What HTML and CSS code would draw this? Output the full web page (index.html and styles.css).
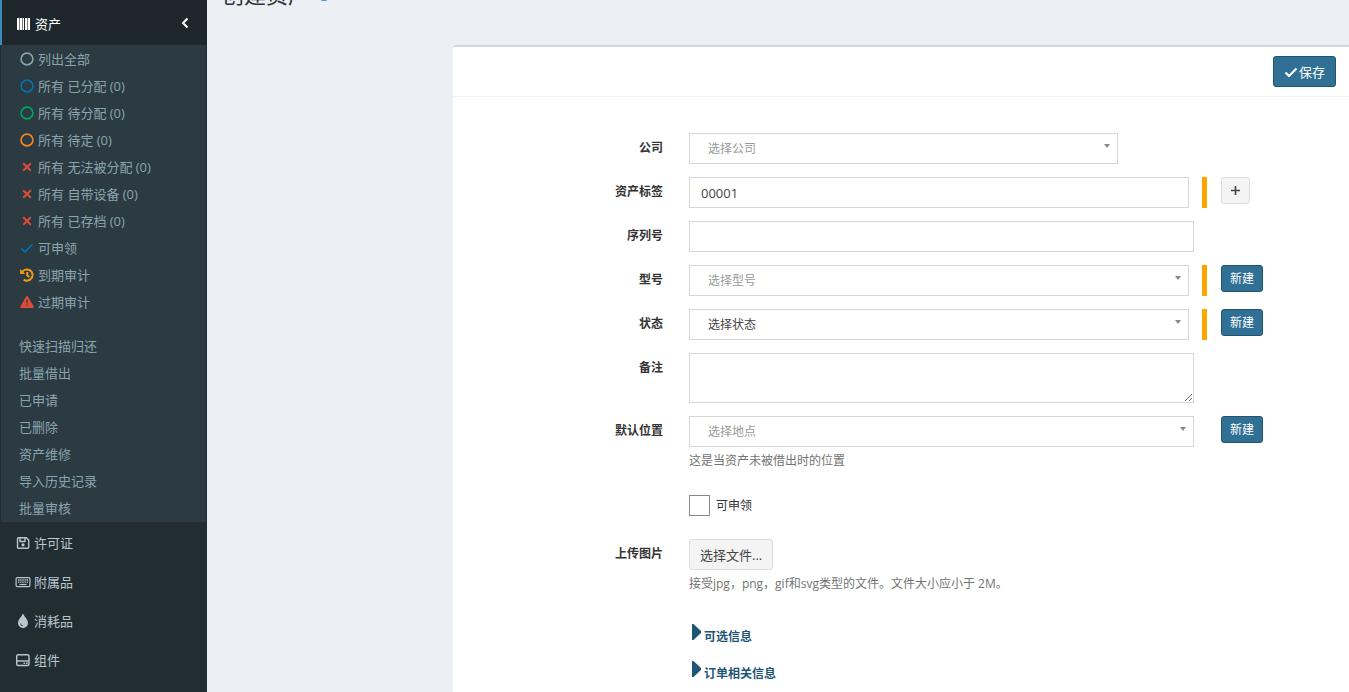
FILE: index.html
```html
<!DOCTYPE html>
<html lang="zh-CN">
<head>
<meta charset="utf-8">
<title>创建资产</title>
<link rel="stylesheet" href="styles.css">
</head>
<body>
<div class="layout">
  <nav class="sidebar">
    <a class="menu-item menu-item--active" href="#">
      <svg class="menu-icon" viewBox="0 0 16 14"><path fill="currentColor" d="M1 1h2v12H1zM4 1h2v12H4zM7 1h1v12H7zM9 1h2v12H9zM12 1h2v12h-2z"/><path fill="currentColor" opacity=".4" d="M3 1h1v12H3zM6 1h1v12H6zM11 1h1v12h-1z"/></svg>
      <span>资产</span>
      <svg class="chevron" viewBox="0 0 8 12"><path d="M6.500 1.500 2 6l4.500 4.500" fill="none" stroke="currentColor" stroke-width="2"/></svg>
    </a>
    <div class="submenu">
      <a class="sub-item" href="#"><svg class="sub-icon" viewBox="0 0 14 14"><circle cx="7" cy="7" r="5.900"/></svg>列出全部</a>
      <a class="sub-item" href="#"><svg class="sub-icon blue" viewBox="0 0 14 14"><circle cx="7" cy="7" r="5.900"/></svg>所有 已分配 (0)</a>
      <a class="sub-item" href="#"><svg class="sub-icon green" viewBox="0 0 14 14"><circle cx="7" cy="7" r="5.900"/></svg>所有 待分配 (0)</a>
      <a class="sub-item" href="#"><svg class="sub-icon orange" viewBox="0 0 14 14"><circle cx="7" cy="7" r="5.900"/></svg>所有 待定 (0)</a>
      <a class="sub-item" href="#"><svg class="sub-icon red thick" viewBox="0 0 14 14"><path d="m3.200 3.200 7.600 7.600m0-7.600-7.600 7.600"/></svg>所有 无法被分配 (0)</a>
      <a class="sub-item" href="#"><svg class="sub-icon red thick" viewBox="0 0 14 14"><path d="m3.200 3.200 7.600 7.600m0-7.600-7.600 7.600"/></svg>所有 自带设备 (0)</a>
      <a class="sub-item" href="#"><svg class="sub-icon red thick" viewBox="0 0 14 14"><path d="m3.200 3.200 7.600 7.600m0-7.600-7.600 7.600"/></svg>所有 已存档 (0)</a>
      <a class="sub-item" href="#"><svg class="sub-icon blue" viewBox="0 0 14 14"><path d="m1.500 7.500 3.500 3.300 7.500-7.600"/></svg>可申领</a>
      <a class="sub-item" href="#"><svg class="sub-icon amber thick" viewBox="0 0 14 14"><path d="M2 4.400A5.600 5.600 0 1 1 3.700 11.600M7.300 4v3.300l2 1.700"/><path class="solid" d="M.2 1v5h5z"/></svg>到期审计</a>
      <a class="sub-item" href="#"><svg class="sub-icon red" viewBox="0 0 14 14"><path class="solid" fill-rule="evenodd" d="M7 .8c.4 0 .7.2.9.6l5.700 10c.5.800 0 1.600-.9 1.600H1.300c-.9 0-1.400-.8-.9-1.600l5.700-10c.2-.4.5-.6.900-.6zM6.300 4.500l.2 4h1l.2-4zM7 9.500a.8.8 0 1 0 0 1.600.8.8 0 0 0 0-1.600z"/></svg>过期审计</a>
      <hr class="divider">
      <a class="sub-item" href="#">快速扫描归还</a>
      <a class="sub-item" href="#">批量借出</a>
      <a class="sub-item" href="#">已申请</a>
      <a class="sub-item" href="#">已删除</a>
      <a class="sub-item" href="#">资产维修</a>
      <a class="sub-item" href="#">导入历史记录</a>
      <a class="sub-item" href="#">批量审核</a>
    </div>
    <a class="menu-item" href="#">
      <svg class="menu-icon" viewBox="0 0 16 14"><path d="M3.500 1.700h7.800l2.400 2.400v7.200a1 1 0 0 1-1 1H3.500a1 1 0 0 1-1-1V2.700a1 1 0 0 1 1-1zM5 2v3.500h5V2" fill="none" stroke="currentColor" stroke-width="1.400"/><circle cx="8" cy="8.800" r="1.600" fill="currentColor"/></svg>
      <span>许可证</span>
    </a>
    <a class="menu-item" href="#">
      <svg class="menu-icon" viewBox="0 0 16 14"><rect x="1.100" y="2.600" width="13.800" height="9" rx="1.200" fill="none" stroke="currentColor" stroke-width="1.200"/><path d="M3 5h10M3 7.200h10" stroke="currentColor" stroke-width="1.300" stroke-dasharray="1.400 .75"/><path d="M4.500 9.500h7" stroke="currentColor" stroke-width="1.200"/></svg>
      <span>附属品</span>
    </a>
    <a class="menu-item" href="#">
      <svg class="menu-icon" viewBox="0 0 16 14"><path fill="currentColor" fill-rule="evenodd" d="M8 0c.4 0 .6.300.7.600.8 2.500 4.300 5 4.300 8.400A4.800 4.800 0 0 1 8 14a4.800 4.800 0 0 1-5-5C3 5.600 6.500 3.100 7.300.600 7.400.3 7.600 0 8 0zM5.200 9.400c.1 1.600 1.200 2.700 2.800 2.800v-.8c-1.200-.1-1.900-.9-2-2z"/></svg>
      <span>消耗品</span>
    </a>
    <a class="menu-item" href="#">
      <svg class="menu-icon" viewBox="0 0 16 14"><rect x="1.700" y="1.700" width="12.300" height="10.800" rx="1.500" fill="none" stroke="currentColor" stroke-width="1.400"/><path d="M2 8h12" stroke="currentColor" stroke-width="1.400"/><path d="M8.500 10.200h1.600m1 0h1.600" stroke="currentColor" stroke-width="1.600"/></svg>
      <span>组件</span>
    </a>
  </nav>

  <main class="content">
    <header class="page-header">
      <h1 class="page-title">创建资产</h1>
      <svg class="info-icon" viewBox="0 0 16 16"><circle cx="8" cy="8" r="8" fill="#3c8dbc"/><path d="M8 7v5M8 3.500v2" stroke="#fff" stroke-width="2"/></svg>
    </header>
    <form class="box">
      <div class="box-header">
        <button class="btn btn-primary" type="button"><svg class="btn-icon" viewBox="0 0 14 14"><path d="m1.500 7.500 3.500 3.500 7.500-7.500" fill="none" stroke="currentColor" stroke-width="2.200"/></svg>保存</button>
      </div>
      <div class="box-body">
        <div class="row">
          <label class="label" for="company">公司</label>
          <div class="field"><div class="select select--short"><select class="control muted" id="company"><option>选择公司</option></select></div></div>
        </div>
        <div class="row">
          <label class="label" for="tag">资产标签</label>
          <div class="field required"><input class="control" id="tag" type="text" value="00001"></div>
          <div class="action"><button class="btn btn-default btn-small" type="button" aria-label="添加"><svg class="plus" viewBox="0 0 11 11"><path d="M5.500 1v9M1 5.500h9" stroke="currentColor" stroke-width="1.600"/></svg></button></div>
        </div>
        <div class="row">
          <label class="label" for="serial">序列号</label>
          <div class="field"><input class="control" id="serial" type="text"></div>
        </div>
        <div class="row">
          <label class="label" for="model">型号</label>
          <div class="field required"><div class="select"><select class="control muted" id="model"><option>选择型号</option></select></div></div>
          <div class="action"><button class="btn btn-primary btn-small" type="button">新建</button></div>
        </div>
        <div class="row">
          <label class="label" for="status">状态</label>
          <div class="field required"><div class="select"><select class="control" id="status"><option>选择状态</option></select></div></div>
          <div class="action"><button class="btn btn-primary btn-small" type="button">新建</button></div>
        </div>
        <div class="row">
          <label class="label" for="notes">备注</label>
          <div class="field"><textarea class="control notes" id="notes"></textarea></div>
        </div>
        <div class="row">
          <label class="label" for="location">默认位置</label>
          <div class="field">
            <div class="select"><select class="control muted" id="location"><option>选择地点</option></select></div>
            <p class="help">这是当资产未被借出时的位置</p>
          </div>
          <div class="action"><button class="btn btn-primary btn-small" type="button">新建</button></div>
        </div>
        <div class="row row--check">
          <div class="field"><label class="check"><input class="checkbox" type="checkbox">可申领</label></div>
        </div>
        <div class="row">
          <span class="label" id="upload-label">上传图片</span>
          <div class="field">
            <button class="btn btn-default" type="button" aria-describedby="upload-label">选择文件...</button>
            <p class="help">接受jpg，png，gif和svg类型的文件。文件大小应小于 2M。</p>
          </div>
        </div>
        <div class="row row--more">
          <div class="field more">
            <a class="toggle" href="#"><svg class="caret" viewBox="0 0 10 16"><path d="M0 0h1.500L9 7v2L1.500 16H0z" fill="currentColor"/></svg>可选信息</a>
            <a class="toggle" href="#"><svg class="caret" viewBox="0 0 10 16"><path d="M0 0h1.500L9 7v2L1.500 16H0z" fill="currentColor"/></svg>订单相关信息</a>
          </div>
        </div>
      </div>
    </form>
  </main>
</div>
</body>
</html>
```

FILE: styles.css
```css
* {
  box-sizing: border-box;
}

body {
  margin: 0;
  font: 13px/18px "Open Sans", "Noto Sans CJK SC", sans-serif;
  color: #333;
  background: #ecf0f5;
}

a {
  text-decoration: none;
}

.layout {
  display: flex;
  height: 100vh;
  overflow: hidden;
}

/* Sidebar */
.sidebar {
  flex: 0 0 207px;
  background: #222d32;
}

.menu-item {
  display: flex;
  align-items: center;
  gap: 3px;
  height: 39px;
  padding: 0 18px 0 15px;
  color: #b8c7ce;
}

.menu-item--active {
  height: 45px;
  padding: 3px 18px 0 14px;
  border-left: 2px solid #3c8dbc;
  background: #1e282c;
  color: #fff;
}

.menu-icon {
  width: 16px;
  height: 14px;
}

.chevron {
  width: 8px;
  height: 12px;
  margin: 0 0 3px auto;
}

.submenu {
  margin: 0 1px 1px;
  padding-bottom: 1px;
  background: #2c3b41;
}

.sub-item {
  display: flex;
  align-items: center;
  gap: 4px;
  height: 27px;
  padding-left: 18px;
  color: #8aa4af;
  white-space: pre;
}

.sub-icon {
  width: 14px;
  height: 14px;
  margin-left: 1px;
  fill: none;
  stroke: currentColor;
  stroke-width: 1.6;
}

.thick {
  stroke-width: 2;
}

.solid {
  fill: currentColor;
  stroke: none;
}

.blue { color: #0073b7; }
.green { color: #00a65a; }
.orange { color: #ff851b; }
.red { color: #dd4b39; }
.amber { color: #f39c12; }

.divider {
  height: 17px;
  margin: 0;
  border: 0;
}

/* Content */
.content {
  flex: 1;
  display: grid;
  grid-template-columns: 246fr 896fr;
  grid-template-rows: 45px 1fr;
}

.page-header {
  grid-column: 1 / -1;
  display: flex;
  align-items: center;
  gap: 7px;
  height: 24px;
  margin-top: -18px;
  padding-left: 15px;
}

.page-title {
  margin: 0;
  font-size: 22px;
  font-weight: 400;
  line-height: 24px;
}

.info-icon {
  width: 14px;
  height: 14px;
}

.box {
  grid-column: 2;
  border-top: 2px solid #d2d6de;
  border-top-left-radius: 3px;
  background: #fff;
}

.box-header {
  display: flex;
  justify-content: flex-end;
  padding: 9px 13px;
  border-bottom: 1px solid #f4f4f4;
}

.box-body {
  display: grid;
  gap: 13px;
  padding-top: 36px;
}

.row {
  display: grid;
  grid-template-columns: 236fr 518fr 142fr;
  align-items: start;
  min-height: 31px;
}

.label {
  padding: 6px 26px 0 0;
  font-size: 12px;
  font-weight: 700;
  text-align: right;
}

.field {
  grid-column: 2;
  padding-right: 13px;
}

.required {
  display: flex;
  gap: 13px;
  padding-right: 0;
}

.required::after {
  content: "";
  flex: 0 0 5px;
  background: #ffa500;
}

.action {
  padding-left: 14px;
}

.control {
  display: block;
  width: 100%;
  height: 31px;
  margin: 0;
  padding: 1px 11px 0;
  border: 1px solid #d2d6de;
  border-radius: 0;
  background: #fff;
  color: #444;
  font: inherit;
}

.notes {
  height: 50px;
  resize: vertical;
}

.select {
  position: relative;
  width: 100%;
}

.select .control {
  padding: 0 18px;
  appearance: none;
  font-size: 12px;
}

.select .muted {
  color: #999;
}

.select--short {
  width: 85%;
}

.select::after {
  content: "";
  position: absolute;
  top: 11px;
  right: 8px;
  border: 3px solid transparent;
  border-top: 4px solid #888;
  border-bottom: 0;
}

.help {
  margin: 5px 0 0;
  color: #737373;
  font-size: 12px;
}

.row--check {
  margin-top: 12px;
}

.check {
  display: inline-flex;
  align-items: center;
  gap: 6px;
  font-size: 12px;
}

.checkbox {
  width: 21px;
  height: 21px;
  margin: 0;
  border: 1px solid #888;
  appearance: none;
}

.row--more {
  margin-top: 18px;
}

.more {
  display: grid;
  gap: 15px;
}

.toggle {
  display: flex;
  align-items: flex-end;
  gap: 2px;
  padding-left: 3px;
  color: #1f5674;
  font-size: 12px;
  font-weight: 700;
}

.caret {
  width: 10px;
  height: 16px;
  margin-bottom: 6px;
}

/* Buttons */
.btn {
  display: inline-flex;
  align-items: center;
  height: 31px;
  padding: 0 10px;
  border: 1px solid #ddd;
  border-radius: 3px;
  font: inherit;
}

.btn-icon {
  width: 14px;
  height: 14px;
  margin-right: 1px;
}

.btn-default {
  background: #f4f4f4;
  color: #444;
}

.btn-primary {
  border-color: #23536f;
  background: #307095;
  color: #fff;
}

.btn-small {
  height: 27px;
  padding: 0 8px;
  font-size: 12px;
}

.plus {
  width: 11px;
  height: 11px;
}
```
